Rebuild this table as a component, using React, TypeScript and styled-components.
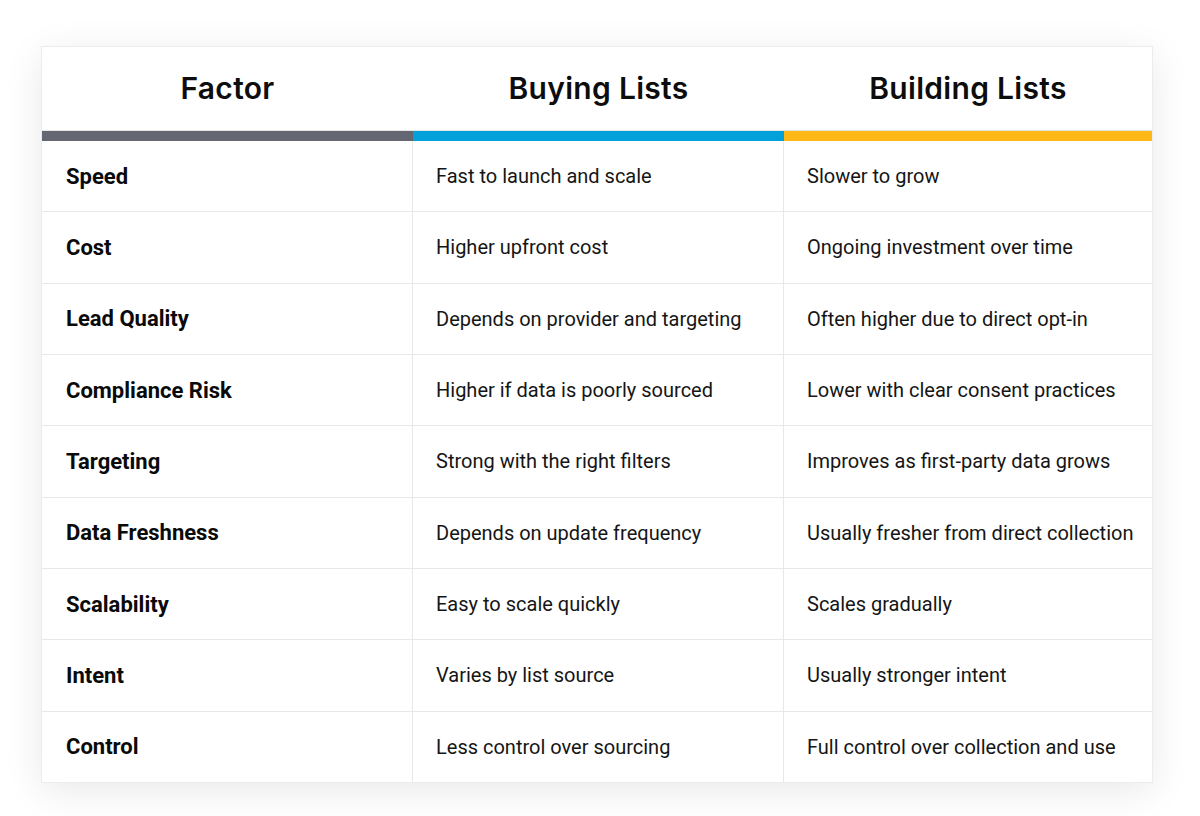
import React from "react";
import styled, { createGlobalStyle } from "styled-components";

const Global = createGlobalStyle`
  html, body { margin: 0; padding: 0; background: #ffffff; }
  body { font-family: Roboto, "Liberation Sans", sans-serif; }
  * { box-sizing: border-box; }
`;

const Page = styled.div`
  width: 1200px;
  height: 816px;
  padding: 46px 0 0 41px;
  background: #ffffff;
`;

const Card = styled.div`
  width: 1112px;
  background: #ffffff;
  border: 1px solid #ececec;
  box-shadow: 0 8px 36px rgba(0, 0, 0, 0.09);
  display: flex;
  flex-direction: column;
`;

const HeaderRow = styled.div`
  display: grid;
  grid-template-columns: 371px 371px 1fr;
  height: 84px;
  border-bottom: 1px solid #e4e4e4;
`;

const HeaderCell = styled.div`
  display: flex;
  align-items: center;
  justify-content: center;
  padding-bottom: 2px;
  font-family: Inter, "Open Sans", sans-serif;
  font-weight: 600;
  font-size: 30px;
  letter-spacing: 0.3px;
  color: #0d0d0d;
`;

const BarRow = styled.div`
  display: grid;
  grid-template-columns: 371px 371px 1fr;
  height: 10px;
`;

const Bar = styled.div<{ $color: string }>`
  background: ${(p) => p.$color};
`;

const Body = styled.div`
  display: flex;
  flex-direction: column;
  height: 641px;
`;

const Row = styled.div`
  flex: 1;
  display: grid;
  grid-template-columns: 371px 371px 1fr;
  border-bottom: 1px solid #e8e8e8;
  &:last-child { border-bottom: none; }
`;

const Cell = styled.div<{ $bold?: boolean }>`
  display: flex;
  align-items: center;
  padding-left: ${(p) => (p.$bold ? 24 : 23)}px;
  font-family: Roboto, "Liberation Sans", sans-serif;
  font-size: ${(p) => (p.$bold ? 22 : 20)}px;
  font-weight: ${(p) => (p.$bold ? 700 : 400)};
  color: ${(p) => (p.$bold ? "#0a0a0a" : "#151515")};
  border-right: 1px solid #e8e8e8;
  &:last-child { border-right: none; }
`;

const rows: [string, string, string][] = [
  ["Speed", "Fast to launch and scale", "Slower to grow"],
  ["Cost", "Higher upfront cost", "Ongoing investment over time"],
  ["Lead Quality", "Depends on provider and targeting", "Often higher due to direct opt-in"],
  ["Compliance Risk", "Higher if data is poorly sourced", "Lower with clear consent practices"],
  ["Targeting", "Strong with the right filters", "Improves as first-party data grows"],
  ["Data Freshness", "Depends on update frequency", "Usually fresher from direct collection"],
  ["Scalability", "Easy to scale quickly", "Scales gradually"],
  ["Intent", "Varies by list source", "Usually stronger intent"],
  ["Control", "Less control over sourcing", "Full control over collection and use"],
];

export default function App() {
  return (
    <Page>
      <Global />
      <Card>
        <HeaderRow>
          <HeaderCell>Factor</HeaderCell>
          <HeaderCell>Buying Lists</HeaderCell>
          <HeaderCell>Building Lists</HeaderCell>
        </HeaderRow>
        <BarRow>
          <Bar $color="#646771" />
          <Bar $color="#02a1dc" />
          <Bar $color="#fdb818" />
        </BarRow>
        <Body>
          {rows.map((r) => (
            <Row key={r[0]}>
              <Cell $bold>{r[0]}</Cell>
              <Cell>{r[1]}</Cell>
              <Cell>{r[2]}</Cell>
            </Row>
          ))}
        </Body>
      </Card>
    </Page>
  );
}
